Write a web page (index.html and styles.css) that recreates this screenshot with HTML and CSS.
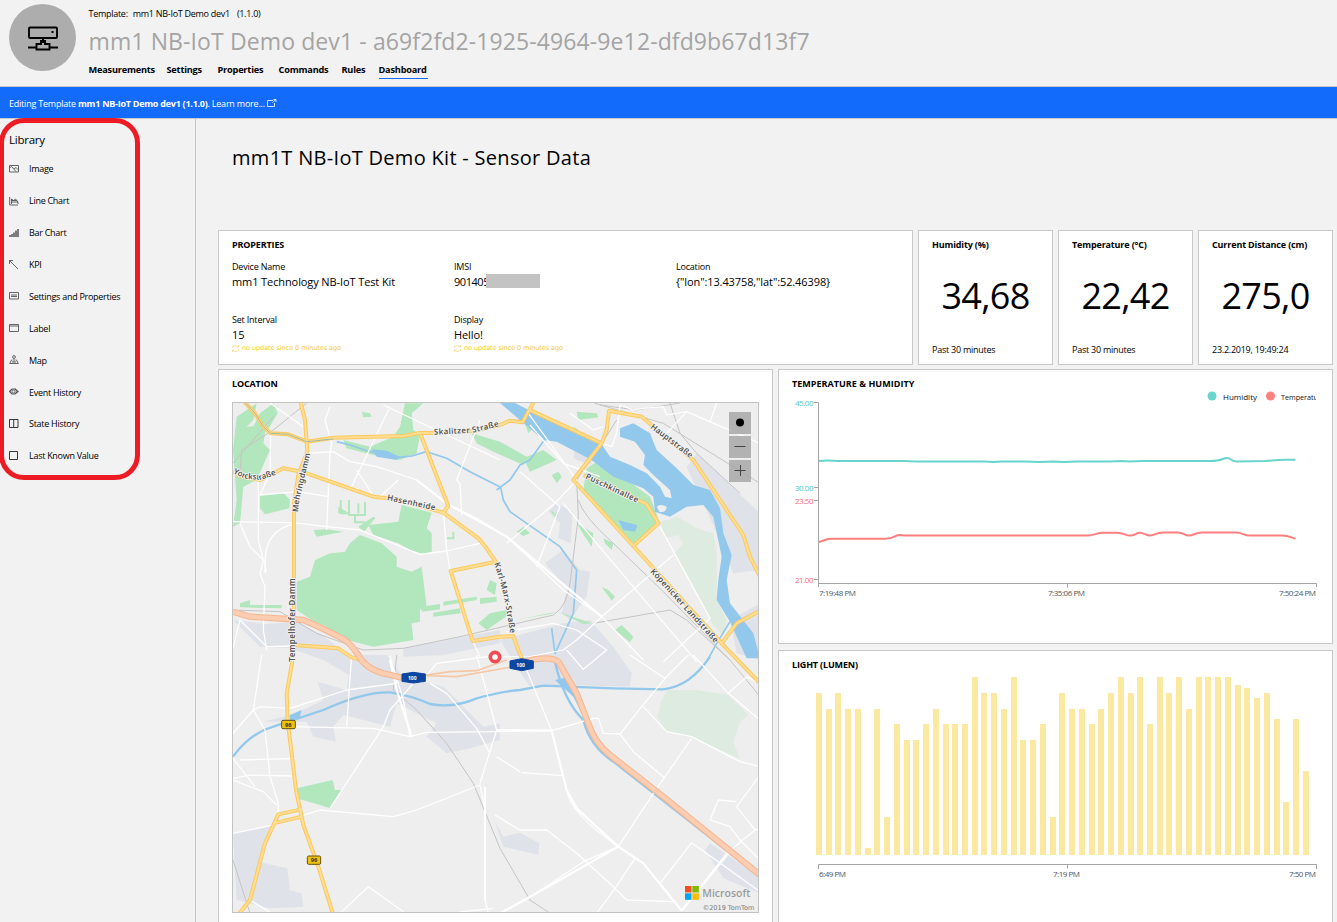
FILE: index.html
```html
<!DOCTYPE html>
<html lang="en">
<head>
<meta charset="utf-8">
<title>mm1 NB-IoT Demo dev1</title>
<link rel="stylesheet" href="styles.css">
</head>
<body>
<header class="header">
  <div class="avatar">
    <svg width="32" height="26" viewBox="0 0 32 26" fill="none" stroke="#000" stroke-width="1.9"><rect x="2" y="1.5" width="28" height="10.5" rx="1"/><path d="M16 12v5M1 21.500h8M23 21.500h8M14 15v3h-4.500v5.500h13v-5.500H18v-3z"/><path d="M25.500 5v2" stroke-width="2"/></svg>
  </div>
  <div class="head-text">
    <div class="template"><span>Template:</span><span>mm1 NB-IoT Demo dev1</span><span>(1.1.0)</span></div>
    <h1 class="device">mm1 NB-IoT Demo dev1 - a69f2fd2-1925-4964-9e12-dfd9b67d13f7</h1>
    <nav class="tabs">
      <a class="t1">Measurements</a><a class="t2">Settings</a><a class="t3">Properties</a><a class="t4">Commands</a><a class="t5">Rules</a><a class="t6 active">Dashboard</a>
    </nav>
  </div>
</header>
<div class="banner"><span>Editing Template <b>mm1 NB-IoT Demo dev1 (1.1.0)</b>. Learn more...</span>
  <svg width="10" height="9" viewBox="0 0 10 9" fill="none" stroke="#fff" stroke-width=".8"><path d="M6 1.500H.5v6h7V4M5.500 3.500 9 .500M6.500.500H9V3"/></svg>
</div>
<div class="body">
  <aside class="sidebar">
    <h2 class="lib-title">Library</h2>
    <ul class="lib">
      <li><svg viewBox="0 0 10 10"><path d="M.5 1.500h9v6.500h-9zM.5 4l2-1.500 4.500 5M5 5l2-1.500L9.500 6"/></svg><span>Image</span></li>
      <li><svg viewBox="0 0 10 10"><path d="M.7 1v8H9M2.500 8V3l2 1.500L6.500 3l2.500 3v2M2.500 6H9M3 4.500h5"/></svg><span>Line Chart</span></li>
      <li><svg viewBox="0 0 10 10"><path d="M1 9V7M3 9V6M5 9V4.500M7 9V2.500M9 9V1" stroke-width="1.500"/></svg><span>Bar Chart</span></li>
      <li><svg viewBox="0 0 10 10"><path d="M.5 4V.500H4M.5.500 9 9"/></svg><span>KPI</span></li>
      <li><svg viewBox="0 0 10 10"><path d="M.5 1.500h9v6.500h-9zM2 4h6M2 5.500h6"/></svg><span>Settings and Properties</span></li>
      <li><svg viewBox="0 0 10 10"><path d="M.5 1.500h9V8.500h-9zM.5 3h9"/></svg><span>Label</span></li>
      <li><svg viewBox="0 0 10 10"><circle cx="5" cy="2" r="1.400"/><path d="M5 3.500V7M3.500 5H2.500L.7 8.500h8.600L7.500 5h-1M3 7h4"/></svg><span>Map</span></li>
      <li><svg viewBox="0 0 10 10"><path d="M.6 4.500 3 2h3l2.500 2.500L6 7H3zM6 2l3 2.500L6 7" stroke-width="1.200"/><circle cx="4.500" cy="4.500" r="1.500"/></svg><span>Event History</span></li>
      <li><svg viewBox="0 0 10 10" class="dark"><path d="M.5.500h8.500v8H.500zM4.700.500v8"/></svg><span>State History</span></li>
      <li><svg viewBox="0 0 10 10" class="dark"><path d="M.5.500h8v8h-8z"/></svg><span>Last Known Value</span></li>
    </ul>
  </aside>
  <main class="main">
    <h2 class="title">mm1T NB-IoT Demo Kit - Sensor Data</h2>
    <div class="row top">
      <section class="card props">
        <h3>PROPERTIES</h3>
        <div class="fields">
          <div class="field"><label>Device Name</label><p>mm1 Technology NB-IoT Test Kit</p></div>
          <div class="field"><label>IMSI</label><p class="masked">901405<i class="mask"></i></p></div>
          <div class="field"><label>Location</label><p>{"lon":13.43758,"lat":52.46398}</p></div>
          <div class="field"><label>Set Interval</label><p>15</p><small><svg width="7" height="7" viewBox="0 0 7 7"><path d="M.5 3V1.500Q3.500-.5 6 1.500M6.500 0v2H5M6.500 4v1.500Q3.500 7.500 1 5.500M.5 7V5H2"/></svg>no update since 0 minutes ago</small></div>
          <div class="field"><label>Display</label><p>Hello!</p><small><svg width="7" height="7" viewBox="0 0 7 7"><path d="M.5 3V1.500Q3.500-.5 6 1.500M6.500 0v2H5M6.500 4v1.500Q3.500 7.500 1 5.500M.5 7V5H2"/></svg>no update since 0 minutes ago</small></div>
        </div>
      </section>
      <section class="card kpi"><h4>Humidity (%)</h4><div class="num">34,68</div><footer>Past 30 minutes</footer></section>
      <section class="card kpi"><h4>Temperature (°C)</h4><div class="num">22,42</div><footer>Past 30 minutes</footer></section>
      <section class="card kpi"><h4>Current Distance (cm)</h4><div class="num">275,0</div><footer>23.2.2019, 19:49:24</footer></section>
    </div>
    <div class="row bottom">
      <section class="card location">
        <h3>LOCATION</h3>
        <div class="map">
          <svg width="525" height="509" viewBox="9 9 1575 1527" fill="none" stroke-linejoin="round">
            <defs>
              <path id="r1" d="M38 0 75 40 100 80 122 100 175 103 230 125 310 113 520 108 570 99 620 99 730 93 810 75 840 62 878 67 895 35 915 0"/>
              <path id="r2" d="M210 0 225 60 230 125 232 155 205 225 192 310 192 645 186 790 170 880 173 965 185 1060 198 1170 220 1275 265 1400 310 1545"/>
              <path id="r3" d="M9 215 35 230 90 240 160 205 215 215 430 290 500 298 640 338 655 318 570 99M640 338 745 415 770 445 797 485 662 513 728 723 810 710 850 708 865 750 880 785"/>
              <path id="r4" d="M895 28 1115 130 1030 240 1210 438 1285 370 1250 312 1060 225M1115 130 1130 90 1137 32 1235 50 1390 180 1540 405 1560 470 1590 530M1210 438 1475 730 1600 860M1475 730 1520 670 1590 632"/>
              <path id="r5" d="M190 735 325 745 365 772 395 780M130 1270 215 1250M215 1228 145 1243 105 1330 60 1500 28 1540"/>
              <path id="m1" d="M9 635 60 650 220 660 Q270 680 345 720Q365 735 385 765 405 805 460 820L525 835M850 800 880 785 Q960 765 985 785L1040 880 1075 970Q1095 1030 1140 1065L1300 1190 1590 1425"/>
              <path id="a1" d="M9 220 45 236 90 240 145 222"/>
              <path id="a2" d="M204 337 208 300 242 155"/>
              <path id="a3" d="M196 785V520"/>
              <path id="a4" d="M470 300 620 332"/>
              <path id="a5" d="M793 490 820 580 843 710"/>
              <path id="a6" d="M1260 83 1385 178"/>
              <path id="a7" d="M1065 235 1225 310"/>
              <path id="a8" d="M1260 515 1460 735"/>
              <path id="a9" d="M612 104 730 98 810 78"/>
            </defs>
            <g class="ind">
              <path d="M9 660 110 672 200 665 290 715 345 760 380 800 470 830 640 860V890L540 860 400 850 280 780 180 745 90 740z"/>
              <path d="M520 745 700 710 810 690 810 730 640 765 520 770z"/>
              <path d="M365 765 470 765 520 830 640 860 760 980 810 970 810 1020 720 1045 650 1060 590 1010 620 970 500 910 480 980 340 945 310 980 318 1025 250 1010 230 965 100 965 200 940 280 900 263 845 350 870z"/>
              <path d="M9 1300 130 1275 85 1385 172 1405 180 1470 215 1480 220 1520 120 1525 20 1500z"/>
              <path d="M810 720 1000 670 1080 660 1150 740 1205 820 1200 860 1000 855 900 860 860 800z"/>
              <path d="M980 310 1028 335 1022 430 985 415 990 370 955 335zM945 490 1000 450 1050 510 1080 515 1070 590 1020 660 995 640 1010 565zM1370 200 1400 160 1590 340 1590 510 1510 520 1470 420zM1500 660 1590 610V780L1520 760zM1035 140 1100 170 1080 195 1030 175z"/>
              <path d="M795 1265 820 1310 870 1298 928 1330 925 1365 820 1340zM1440 1330 1590 1430V1480L1480 1435 1425 1350z"/>
            </g>
            <g class="pale">
              <path d="M1290 365 1340 350 1385 375 1400 385 1450 400 1460 460 1460 600 1490 660 1480 710 1440 660 1335 460 1360 430 1345 405 1305 415z"/>
              <path d="M1310 870 1400 870 1495 885 1555 945 1530 965 1510 1025 1528 1075 1390 1015 1310 995 1282 950 1292 910z"/>
            </g>
            <g class="green">
              <path d="M20 50 80 10 70 60 50 80 110 75 100 130 120 150 80 240 40 260 30 370 9 380 20 300 9 150z"/>
              <path d="M130 10 143 40 110 95 70 80 90 40z"/>
              <path d="M525 10H580L545 40 550 90 570 105 560 160 510 180 430 165 350 145 340 120 420 140 490 110 510 80z"/>
              <path d="M725 100 810 125 890 170 880 195 790 155 740 130z"/>
              <path d="M90 285 160 278 180 300 178 325 105 343 90 325z"/>
              <path d="M415 375 505 365 515 315 605 338 590 385 605 400 605 455 580 462 540 450 505 430 430 405z"/>
              <path d="M390 405 455 430 500 470 500 500 545 515 575 500 590 620 570 630 570 665 545 670 550 720 430 740 330 715 290 680 245 660 200 630 200 545 240 530 255 480 300 460 345 455 360 430z"/>
              <path d="M250 390 260 410 340 395 290 388zM325 320 350 335 325 340M385 380 430 350 436 354 402 395zM575 635 630 628 630 612 575 620zM640 605 740 590V600L640 617zM610 638 690 625 692 640 610 650zM780 540 800 550 795 585 770 570zM750 595 800 590V605L750 612zM745 670 780 640 830 630 835 645 770 690zM395 35 420 40 425 50 400 52zM30 610 60 600 60 615 155 615V625L30 622z"/>
              <path d="M1070 205 1110 180 1260 290 1290 370 1215 435 1060 270z"/>
              <path d="M880 175 940 150 980 180 900 215zM1040 35 1100 40 1105 52 1045 60zM965 225 985 215 995 230 980 250zM860 395 880 380 900 400 880 408zM1040 370 1090 400 1085 440 1065 410zM1120 415 1150 430 1145 450 1125 430zM960 330 985 345 980 355zM1115 560 1135 570 1155 590 1145 602zM1155 690 1175 675 1210 710 1200 727zM985 635 1085 670 1060 672zM855 660 980 635 960 642z"/>
              <path d="M200 1165 308 1140 315 1170 335 1170 300 1225 270 1215 200 1195z"/>
              <path d="M1030 80 1045 90 1035 125 1030 110zM885 70 905 90 895 100z"/>
            </g>
            <path d="M332 300v40h25M357 300v45h48V305M385 310v30M375 345v22h32M650 415h20v-20" stroke="#b2e6bd" stroke-width="6"/>
            <g class="water">
              <path d="M810 9H855L925 45 1110 125 1140 170 1200 195 1250 220 1290 260 1305 290 1325 295 1320 270 1270 225 1240 195 1245 165 1215 125 1170 110 1170 85 1210 70 1260 100 1280 150 1340 205 1390 255 1440 270 1470 325 1480 400 1505 465 1490 540 1500 610 1570 700 1590 775H1550L1500 665 1460 600 1465 540 1475 470 1450 350 1420 315 1370 320 1320 350 1275 335 1270 290 1240 265 1150 230 1085 180 980 125 940 120z"/>
              <path d="M1165 360 1200 370 1222 375 1215 395 1180 390zM425 148 470 152 510 170 500 180 440 170zM180 945 215 930 210 950 180 962zM975 840 1020 830 1050 900 1070 970 1030 890z"/>
            </g>
            <path d="M1280 320q10-10 30 0-2 20-22 15z" fill="#eee"/>
            <path class="river thin" d="M320 125 360 135 420 155 500 173 545 168 590 155 650 175 720 215 812 262 820 300 840 335 990 440 1040 510 1030 640 975 760 965 685M950 110 925 145 900 180 870 195 840 240 800 270M1500 665 1460 730 1430 785"/>
            <path class="river" d="M9 1070Q60 1000 130 980L280 930Q400 875 480 877 550 888 600 912 670 925 740 895 810 875 870 870L940 857 1150 865 1300 868Q1380 860 1440 770M975 785Q1000 900 1060 960 1080 1040 1150 1085L1590 1430"/>
            <path class="rail" d="M130 50 9 190M30 225 35 150 130 90 230 9M9 630 150 635 260 700 400 750 520 745 690 710 970 645Q1010 620 1020 550L1045 350 1040 240 1110 140 1160 60M1045 300Q1060 350 1150 430L1300 575 1500 780M500 765 490 870 560 930 650 1030 730 1150 810 1345 900 1500 960 1540M1095 10 1300 70 1590 250M1320 9 1350 100 1400 160 1530 280M1110 15 1220 30 1350 9M1090 670 1320 630 1370 660 1500 780 1590 890M9 1380 60 1540"/>
            <g class="road">
              <path d="M9 365 190 368 290 380 390 390 570 463 650 453 750 430M85 240V420L100 480 90 520 105 560 100 690 110 750M9 745 30 660 110 740 190 738M30 370 60 440 105 485V520M200 370Q90 390 108 515M300 20 285 60 305 130 300 160 290 390M480 20 360 270 385 265M450 290 505 240M120 9 220 80M122 100 120 220 90 285 205 275 295 290M230 160 310 155 360 185 440 200 560 240 650 310 750 360 830 410 1000 570 1115 650 1240 780M380 210 425 280V290M460 15 810 180M750 60 680 240 690 250 695 345M640 338 650 450 660 510M728 723 750 770"/>
              <path d="M895 40 1040 240 975 310 830 430M870 215 990 320 920 500M1000 310 1100 430 1260 620 1400 785M900 75 1000 190 1110 230M1020 40 1090 90 1120 80M1115 130 1145 140 1160 100 1170 15 1210 30 1240 25 1300 20 1310 45 1370 35 1590 130M1370 35 1310 100M1460 9 1440 65M1290 380 1440 655 1300 785M1115 650 1330 465M830 695 970 670 1040 690 1130 750 1060 808 1010 750M1115 650 1040 720 1000 750 900 770 800 770"/>
              <path d="M180 925 350 870 500 850 480 770 520 900 540 1010M70 930 9 1000M95 765 70 930 90 920 180 925M70 930 105 990 120 1130 145 1210V1245M365 765 350 980M180 980 430 985 540 1010 590 997 800 995 965 992 1090 955 1105 955 1120 1000 1170 1002 1235 920 1310 830M550 850 480 930 460 980 300 1225M30 1080 180 1076M9 1135 60 1125 185 1128M9 1140 100 1175 140 1215M9 1075 75 1160M9 1300 130 1275 270 1230 490 1250 560 1230 750 1155 765 1230 765 1500 775 1540M740 765 800 990 750 1150M600 850 650 880 740 985 780 1060M570 850 620 790 810 765M60 1500 125 1540M330 1540 415 1460 520 1535M690 1536 790 1525"/>
              <path d="M890 810 965 992 1010 1170Q1020 1240 1165 1340L1240 1390 1355 1532 1490 1360 1575 1290 1590 1285M875 1118 1000 1127M800 1070 870 1115M1165 1340 1060 1385 910 1485 810 1540M795 1245 870 1290 950 1290 1040 1360 1155 1465 1190 1500 1330 1505M1165 1340 1270 1180 1385 1015M1240 920 1310 995 1385 1010 1530 1085 1590 1100M1170 1002 1210 1055 1305 1135M1215 1375 1155 1465 1100 1540M1290 1450 1385 1328 1590 1475M1590 1125 1520 1220 1575 1290M1520 1205 1465 1200 1440 1260 1500 1280 1530 1320 1590 1380M1200 765 1305 835 1375 765M1390 765 1495 880 1590 960M1495 880 1550 830 1590 850"/>
            </g>
            <g class="wide"><path d="M800 990 965 992M765 1160V1500M480 780 500 870 545 1010M965 992 1010 1170 1040 1225 1165 1340 1240 1390 1355 1532M1165 1340 910 1485 810 1540M1355 1532 1495 1360M560 240 650 310 830 410 1115 650"/></g>
            <path d="M525 835 660 815 740 812 830 780M540 825 680 830 850 800" stroke="#f6c7a5" stroke-width="5"/>
            <g class="yc"><use href="#r1"/><use href="#r2"/><use href="#r3"/><use href="#r4"/><use href="#r5"/></g>
            <g class="yi"><use href="#r1"/><use href="#r2"/><use href="#r3"/><use href="#r4"/><use href="#r5"/></g>
            <path d="M38 0 75 40 100 80 122 100 175 103 230 125 310 117" stroke="#a3b8a3" stroke-width="3"/>
            <use href="#m1" stroke="#f5b58f" stroke-width="19"/><use href="#m1" stroke="#fccdb0" stroke-width="13"/>
            <path d="M516 822 550 817 586 822V844L550 849 516 844zM840 783 875 776 910 783V805L875 812 840 805z" fill="#0b47a1" stroke="#0b47a1" stroke-width="3"/>
            <g class="shield"><text x="534" y="840">100</text><text x="859" y="800">100</text></g>
            <rect x="155" y="961" width="41" height="25" rx="4" class="sh96"/><rect x="232" y="1368" width="40" height="25" rx="4" class="sh96"/>
            <g class="n96"><text x="165" y="980">96</text><text x="242" y="1387">96</text></g>
            <circle cx="795" cy="771" r="14" stroke="#f04a52" stroke-width="11" fill="#fff"/>
            <g class="lbl">
              <text textLength="136"><textPath href="#a1">Yorckstraße</textPath></text>
              <text textLength="180"><textPath href="#a2">Mehringdamm</textPath></text>
              <text textLength="250"><textPath href="#a3">Tempelhofer Damm</textPath></text>
              <text textLength="148"><textPath href="#a4">Hasenheide</textPath></text>
              <text textLength="216"><textPath href="#a5">Karl-Marx-Straße</textPath></text>
              <text textLength="152"><textPath href="#a6">Hauptstraße</textPath></text>
              <text textLength="172"><textPath href="#a7">Puschkinallee</textPath></text>
              <text textLength="290"><textPath href="#a8">Köpenicker Landstraße</textPath></text>
              <text textLength="198"><textPath href="#a9">Skalitzer Straße</textPath></text>
            </g>
            <path d="M1365 1458h19.500v19.500h-19.500z" fill="#f25022"/><path d="M1387 1458h19.500v19.500H1387z" fill="#7fba00"/><path d="M1365 1480h19.500v19.500h-19.500z" fill="#00a4ef"/><path d="M1387 1480h19.500v19.500H1387z" fill="#ffb900"/>
            <text x="1417" y="1491" class="ms" textLength="144" lengthAdjust="spacingAndGlyphs">Microsoft</text>
            <text x="1418" y="1529" class="tt" textLength="155" lengthAdjust="spacingAndGlyphs">©2019 TomTom</text>
          </svg>
          <div class="controls">
            <svg viewBox="0 0 22 22"><circle cx="11" cy="10.500" r="4" fill="#000"/></svg>
            <svg viewBox="0 0 22 22"><path d="M5.500 10.500h11" stroke="#444"/></svg>
            <svg viewBox="0 0 22 22"><path d="M5.500 10.500h11M11.500 5v11" stroke="#444"/></svg>
          </div>
        </div>
      </section>
      <div class="col">
        <section class="card temp">
          <h3>TEMPERATURE &amp; HUMIDITY</h3>
          <svg class="lines" width="553" height="212" viewBox="779 390 553 212" fill="none">
            <circle cx="1212" cy="396" r="4.500" fill="#67d5cb"/><circle cx="1270.500" cy="396" r="4.500" fill="#ff7f7f"/>
            <g class="legend"><text x="1223" y="400" textLength="34" lengthAdjust="spacingAndGlyphs">Humidity</text>
            <svg x="1280" y="390" width="36" height="15" viewBox="0 0 36 15"><text x="1" y="10" textLength="44" lengthAdjust="spacingAndGlyphs">Temperature</text></svg></g>
            <path d="M814 402.500h4.500V587M814 487.500h4.500M814 500.500h4.500M814 579.500h4.500M818.500 583.500h498V587M1067.500 583.500v4" stroke="#a5a5a5"/>
            <path d="M819 461Q828 460 838 461L905 461 915 461.600 985 461.500 993 462 1002 461.500 1025 461.500 1040 462 1053 461.500 1064 462 1076 461.500 1110 461.500 1121 461 1130 461.500 1142 461 1210 461Q1218 461 1223 459T1231 459.500 1239 461.500L1265 461Q1280 460 1285 459.800H1295.500" stroke="#67d5cb" stroke-width="2"/>
            <path d="M819 542 828 539Q832 538.500 840 538.800H885Q891 538.500 895 536.300T904 535.500H1088C1095 535.500 1096 532.700 1103 532.700H1117C1124 532.700 1125 535.600 1130 535.600S1136 532.700 1140 532.700 1146 535.600 1150 535.600 1156 532.500 1163 532.500H1178C1184 532.500 1184 535.600 1189 535.600S1195 532.600 1202 532.600H1236C1243 532.600 1243 535.500 1250 535.500H1282C1289 535.500 1290 537 1295.500 538.700" stroke="#ff7f7f" stroke-width="2"/>
            <g class="ax teal"><text x="795" y="406" textLength="18.500">45.00</text><text x="795" y="491" textLength="18.500">30.00</text></g>
            <g class="ax red"><text x="795" y="504" textLength="18.500">23.50</text><text x="795" y="583" textLength="18.500">21.00</text></g>
            <g class="ax"><text x="819" y="596" textLength="37">7:19:48 PM</text><text x="1048" y="596" textLength="37">7:35:06 PM</text><text x="1279" y="596" textLength="37">7:50:24 PM</text></g>
          </svg>
        </section>
        <section class="card light">
          <h3>LIGHT (LUMEN)</h3>
          <div class="bars"><i style="height:162px"></i><i style="height:146px"></i><i style="height:162px"></i><i style="height:146px"></i><i style="height:146px"></i><i style="height:7px"></i><i style="height:146px"></i><i style="height:38px"></i><i style="height:131px"></i><i style="height:115px"></i><i style="height:115px"></i><i style="height:131px"></i><i style="height:146px"></i><i style="height:131px"></i><i style="height:131px"></i><i style="height:131px"></i><i style="height:178px"></i><i style="height:162px"></i><i style="height:162px"></i><i style="height:146px"></i><i style="height:178px"></i><i style="height:115px"></i><i style="height:115px"></i><i style="height:131px"></i><i style="height:38px"></i><i style="height:162px"></i><i style="height:146px"></i><i style="height:146px"></i><i style="height:131px"></i><i style="height:146px"></i><i style="height:162px"></i><i style="height:178px"></i><i style="height:162px"></i><i style="height:178px"></i><i style="height:131px"></i><i style="height:178px"></i><i style="height:162px"></i><i style="height:178px"></i><i style="height:146px"></i><i style="height:178px"></i><i style="height:178px"></i><i style="height:178px"></i><i style="height:178px"></i><i style="height:170px"></i><i style="height:167px"></i><i style="height:157px"></i><i style="height:162px"></i><i style="height:136px"></i><i style="height:53px"></i><i style="height:136px"></i><i style="height:84px"></i></div>
          <svg class="lines" width="553" height="26" viewBox="779 860 553 26" fill="none">
            <path d="M818.500 869v-4.500h498v4.500M1067.500 864.500v4" stroke="#a5a5a5"/>
            <g class="ax"><text x="819" y="877" textLength="27">6:49 PM</text><text x="1053" y="877" textLength="27">7:19 PM</text><text x="1289" y="877" textLength="27">7:50 PM</text></g>
          </svg>
        </section>
      </div>
    </div>
  </main>
  <div class="highlight"></div>
</div>
</body>
</html>
```

FILE: styles.css
```css
* { box-sizing: border-box; margin: 0; padding: 0; }
body { width: 1337px; height: 922px; overflow: hidden; background: #f2f2f2; color: #000; font-family: "Open Sans", "Noto Sans", sans-serif; font-size: 9px; line-height: 12px; }
svg { display: block; flex: none; }
.header { height: 87px; display: flex; padding-left: 9px; border-bottom: 1px solid #c8c8c8; white-space: nowrap; }
.avatar { width: 67px; height: 67px; margin-top: 4px; border-radius: 50%; background: #adadad; display: flex; align-items: center; justify-content: center; padding-top: 3px; }
.head-text { padding: 8px 0 0 12.500px; }
.template { display: flex; letter-spacing: -.28px; }
.template span:nth-child(2) { margin: 0 7px 0 5px; }
.device { font-weight: 400; font-size: 23px; line-height: 30px; margin-top: 6px; margin-bottom: 6px; color: #a4a4a4; letter-spacing: .11px; }
.tabs { display: flex; font-weight: 700; font-size: 9.200px; }
.tabs a { height: 17px; line-height: 16px; letter-spacing: -.2px; }
.t1 { width: 78px; }
.t2 { width: 51px; }
.t3 { width: 61px; }
.t4 { width: 63px; }
.t5 { width: 37px; }
.t6 { width: 49px; }
.active { border-bottom: 1px solid #136bfb; }
.banner { height: 32px; background: #136bfb; color: #fff; display: flex; align-items: center; gap: 2px; padding: 2px 0 0 9px; border-bottom: 1px solid #c8c8c8; letter-spacing: -.22px; }
.banner b { font-weight: 700; letter-spacing: -.25px; }
.body { position: relative; display: flex; height: 803px; }
.sidebar { width: 196px; border-right: 1px solid #c8c8c8; padding: 13px 0 0 9px; }
.lib-title { font-size: 11.500px; font-weight: 400; line-height: 16px; letter-spacing: -.25px; }
.lib { list-style: none; padding-top: 5.450px; }
.lib li { height: 31.880px; display: flex; align-items: center; gap: 10px; letter-spacing: -.28px; }
.lib svg { width: 10px; height: 10px; margin-top: -1px; fill: none; stroke: #555; stroke-width: .9; }
.lib svg.dark { stroke: #222; }
.highlight { position: absolute; left: -1px; top: -1px; width: 141px; height: 362px; border: 5px solid #ed1c24; border-radius: 25px; }
.main { padding: 0 0 0 22px; width: 1137px; }
.title { height: 111px; padding: 24px 0 0 14px; font-size: 20px; font-weight: 400; line-height: 30px; letter-spacing: .3px; }
.row { display: flex; gap: 5px; }
.bottom { margin-top: 4px; }
.card { background: #fff; border: 1px solid #c8c8c8; }
.card h3, .card h4 { font-size: 9px; font-weight: 700; line-height: 12px; padding: 8px 0 0 13px; letter-spacing: -.15px; white-space: nowrap; }
.card.temp h3 { letter-spacing: .03px; }
.top .card { height: 135px; }
.props { width: 695px; }
.fields { display: grid; grid-template-columns: 222px 222px 222px; grid-template-rows: 53px 44px; padding: 10px 0 0 13px; }
.field label { display: block; letter-spacing: -.2px; }
.field p { font-size: 11px; line-height: 15px; margin: 1px 0; display: flex; align-items: center; letter-spacing: -.1px; white-space: nowrap; }
.field p.masked { letter-spacing: -.45px; }
.field small { font-family: "DejaVu Sans", sans-serif; font-size: 6.500px; line-height: 9px; color: #f3cb2c; display: flex; gap: 3px; align-items: center; margin-top: 2px; letter-spacing: -.06px; }
.field small svg { fill: none; stroke: #f5d58a; stroke-width: .8; }
.mask { width: 54px; height: 14px; background: #c3c3c3; margin: -2px 0 0 -3px; }
.kpi { width: 135px; }
.num { font-size: 36px; line-height: 48px; text-align: center; margin-top: 21px; letter-spacing: -.7px; }
.kpi footer { padding: 24px 0 0 13px; letter-spacing: -.25px; }
.location { width: 555px; height: 560px; }
.map { position: relative; width: 527px; height: 511px; border: 1px solid #c3c3c3; margin: 12px 0 0 13px; background: #eee; overflow: hidden; }
.controls { position: absolute; right: 7px; top: 9px; display: grid; gap: 2px; }
.controls svg { width: 22px; height: 22px; background: rgba(165,165,165,.82); }
.ind path { fill: #dfe2e8; }
.pale path { fill: #deebe1; }
.green path { fill: #b2e6bd; }
.water path { fill: #91c8ec; }
.river { stroke: #91c8ec; stroke-width: 7; }
.river.thin { stroke-width: 5; }
.rail { stroke: #c4c4c4; stroke-width: 3; }
.road path { stroke: #fff; stroke-width: 3.800; }
.wide path { stroke: #fff; stroke-width: 6.500; }
.yc { stroke: #fdc95c; stroke-width: 12; }
.yi { stroke: #ffdd94; stroke-width: 6; }
.shield { fill: #fff; font: 700 15px "Noto Sans", sans-serif; }
.sh96 { fill: #eec20d; stroke: #645313; stroke-width: 3; }
.n96 { fill: #333; font: 700 17px "Noto Sans", sans-serif; }
.lbl { fill: #555; stroke: #f4f4f4; stroke-width: 5; paint-order: stroke; font: 600 24px "Noto Sans", sans-serif; }
.ms { fill: #9b9b9b; font: 600 32px "Open Sans", sans-serif; }
.tt { fill: #777; font: 20px "DejaVu Sans", sans-serif; }
.col { display: flex; flex-direction: column; gap: 6px; width: 555px; }
.temp { height: 275px; }
.light { height: 280px; }
.legend { fill: #111; font: 8px "Open Sans", sans-serif; }
.ax { fill: #555; font: 8px "Open Sans", sans-serif; }
.ax.teal { fill: #4fcabf; }
.ax.red { fill: #ff6b6b; }
.bars { display: flex; align-items: flex-end; justify-content: space-between; height: 184px; width: 493px; margin-left: 37px; }
.bars i { width: 6px; background: #fce9a1; }
.light .lines { margin-top: 5px; }
```
